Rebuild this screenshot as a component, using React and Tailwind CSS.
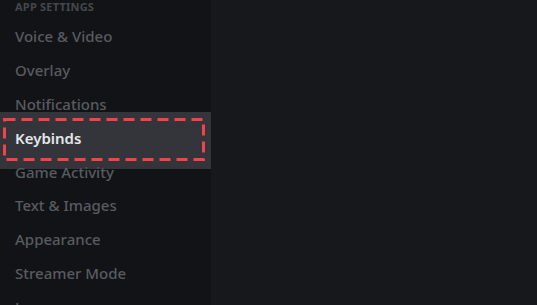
import React from "react"

const items = [
  "Voice & Video",
  "Overlay",
  "Notifications",
  "Keybinds",
  "Game Activity",
  "Text & Images",
  "Appearance",
  "Streamer Mode",
  "Language",
]

export default function App() {
  return (
    <div
      className="flex h-[305px] w-[537px] overflow-hidden bg-[#17181c]"
      style={{ fontFamily: '"Noto Sans", "Open Sans", sans-serif' }}
    >
      <aside className="w-[211px] shrink-0 bg-[#121316]">
        <div className="h-[22.5px] -mt-[3px] pl-[15px] text-[11px] font-bold uppercase leading-[20px] tracking-[0.02em] text-[#45474d]">
          App Settings
        </div>
        <ul>
          {items.map((label) => {
            const active = label === "Keybinds"
            return (
              <li key={label} className="relative flex h-[33.86px] items-center">
                {active && (
                  <>
                    <div className="absolute -top-[9.5px] -bottom-[13.7px] left-0 right-0 bg-[#33353b]" />
                    <svg
                      className="absolute -top-[4px] left-[2px] h-[45px] w-[204px]"
                      viewBox="0 0 204 45"
                    >
                      <rect
                        x="2.5"
                        y="2.5"
                        width="199"
                        height="40"
                        fill="none"
                        stroke="#f2434b"
                        strokeWidth="3"
                        strokeDasharray="11 6"
                      />
                    </svg>
                  </>
                )}
                <span
                  className={
                    "relative pl-[15px] text-[15px] " +
                    (active ? "font-semibold text-[#e6e7ea]" : "font-medium text-[#585b61]")
                  }
                >
                  {label}
                </span>
              </li>
            )
          })}
        </ul>
      </aside>
      <main className="flex-1" />
    </div>
  )
}
